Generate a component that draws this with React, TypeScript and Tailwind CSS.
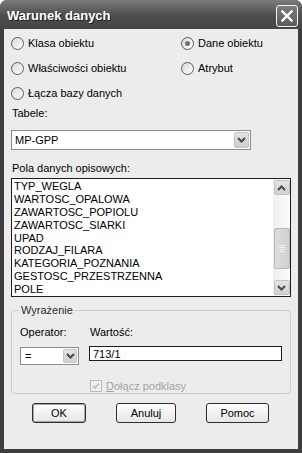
import React from "react";

function Chevron({ up = false, color = "#4a4a4a" }: { up?: boolean; color?: string }) {
  return (
    <svg width="9" height="6" viewBox="0 0 9 6">
      <path
        d={up ? "M1 5 L4.5 1.5 L8 5" : "M1 1 L4.5 4.5 L8 1"}
        fill="none"
        stroke={color}
        strokeWidth="2"
      />
    </svg>
  );
}

function Radio({ label, checked = false }: { label: string; checked?: boolean }) {
  return (
    <div className="flex items-center h-[24px]">
      <span className="w-[13px] h-[13px] rounded-full border border-[#5c5c5c] bg-gradient-to-br from-[#d9d9d9] to-[#ffffff] flex items-center justify-center shrink-0">
        {checked && <span className="w-[5px] h-[5px] rounded-full bg-[#707070]" />}
      </span>
      <span className="ml-[4px]">{label}</span>
    </div>
  );
}

function DropBtn({ w = 15, h = 16 }: { w?: number; h?: number }) {
  return (
    <div
      className="rounded-[2px] bg-gradient-to-b from-[#e2e2e2] to-[#cfcfcf] border border-[#c4c4c4] flex items-center justify-center"
      style={{ width: w, height: h }}
    >
      <Chevron />
    </div>
  );
}

const items = [
  "TYP_WEGLA",
  "WARTOSC_OPALOWA",
  "ZAWARTOSC_POPIOLU",
  "ZAWARTOSC_SIARKI",
  "UPAD",
  "RODZAJ_FILARA",
  "KATEGORIA_POZNANIA",
  "GESTOSC_PRZESTRZENNA",
  "POLE",
];

export default function App() {
  return (
    <div className="w-[302px] h-[453px] bg-[#3e3e3e] flex flex-col rounded-t-[7px] overflow-hidden font-['Liberation_Sans',Arial,sans-serif] text-[11px] text-black leading-[14px]">
      <div className="h-[29px] shrink-0 flex items-center justify-between pl-[7px] pr-[4px] bg-gradient-to-b from-[#7c7c7c] via-[#4f4f4f] to-[#444444]">
        <span className="text-white font-bold text-[13px] [text-shadow:1px_1px_0_#1e1e1e] mt-[2px]">
          Warunek danych
        </span>
        <div className="w-[22px] h-[22px] rounded-[3px] border border-[#f2f2f2] bg-gradient-to-b from-[#7e7e7e] to-[#5a5a5a] flex items-center justify-center mt-[3px]">
          <svg width="12" height="12" viewBox="0 0 12 12">
            <path d="M1.5 1.5 L10.5 10.5 M10.5 1.5 L1.5 10.5" stroke="#ffffff" strokeWidth="2.4" strokeLinecap="square" />
          </svg>
        </div>
      </div>

      <div className="flex-1 mx-[4px] mb-[4px] bg-[#ececec] flex flex-col px-[7px]">
        <div className="grid grid-cols-[170px_1fr] gap-y-[1px] pt-[2px]">
          <Radio label="Klasa obiektu" />
          <Radio label="Dane obiektu" checked />
          <Radio label="Właściwości obiektu" />
          <Radio label="Atrybut" />
          <Radio label="Łącza bazy danych" />
          <div />
        </div>

        <div className="mt-[1px] h-[14px] pl-[1px]">Tabele:</div>
        <div className="mt-[10px] w-[240px] h-[20px] border border-[#8c8c8c] bg-white flex items-center justify-between pl-[3px] pr-[1px]">
          <span>MP-GPP</span>
          <DropBtn w={15} h={16} />
        </div>

        <div className="mt-[11px] h-[14px] pl-[1px]">Pola danych opisowych:</div>
        <div className="mt-[3px] h-[119px] border border-[#1e1e1e] bg-white flex">
          <div className="flex-1 pl-[2px] pt-[1px] leading-[12.9px] overflow-hidden">
            {items.map((t) => (
              <div key={t} className="h-[12.9px] whitespace-nowrap">
                {t}
              </div>
            ))}
          </div>
          <div className="w-[17px] bg-gradient-to-r from-[#f0f0f0] to-[#fbfbfb] flex flex-col items-center pt-[1px] pb-[1px]">
            <div className="w-[16px] h-[15px] rounded-[2px] bg-gradient-to-b from-[#e4e4e4] to-[#d0d0d0] border border-[#c2c2c2] flex items-center justify-center">
              <Chevron up />
            </div>
            <div className="w-[16px] h-[41px] mt-[33px] rounded-[2px] bg-gradient-to-r from-[#dcdcdc] to-[#d2d2d2] border border-[#b8b8b8] flex flex-col items-center justify-center gap-[1px]">
              <div className="w-[6px] h-[1px] bg-[#f0f0f0]" />
              <div className="w-[6px] h-[1px] bg-[#f0f0f0]" />
              <div className="w-[6px] h-[1px] bg-[#f0f0f0]" />
              <div className="w-[6px] h-[1px] bg-[#f0f0f0]" />
            </div>
            <div className="flex-1" />
            <div className="w-[16px] h-[15px] rounded-[2px] bg-gradient-to-b from-[#e4e4e4] to-[#d0d0d0] border border-[#c2c2c2] flex items-center justify-center">
              <Chevron />
            </div>
          </div>
        </div>

        <div className="relative mt-[13px] h-[84px] border border-[#cfcfcf] rounded-[4px] pl-[8px] pt-[14px]">
          <span className="absolute top-[-8px] left-[7px] px-[2px] bg-[#ececec] text-[#2a2a2a]">Wyrażenie</span>
          <div className="flex">
            <div className="w-[69px]">
              <div className="h-[14px]">Operator:</div>
              <div className="mt-[8px] w-[59px] h-[18px] border border-[#8c8c8c] bg-white flex items-center justify-between pl-[4px] pr-[1px]">
                <span>=</span>
                <DropBtn w={14} h={14} />
              </div>
            </div>
            <div className="flex-1">
              <div className="h-[14px] pl-[1px]">Wartość:</div>
              <div className="mt-[7px] w-[193px] h-[15px] border border-[#1e1e1e] bg-white flex items-center pl-[3px]">
                713/1
              </div>
            </div>
          </div>
          <div className="mt-[15px] ml-[70px] flex items-center h-[12px]">
            <span className="w-[12px] h-[12px] border border-[#b9b9b9] bg-[#f2f2f2] flex items-center justify-center">
              <svg width="8" height="8" viewBox="0 0 8 8">
                <path d="M1 4 L3 6 L7 1.5" fill="none" stroke="#bdbdbd" strokeWidth="1.8" />
              </svg>
            </span>
            <span className="ml-[4px] text-[#a3a3a3]">
              <span className="underline">D</span>ołącz podklasy
            </span>
          </div>
        </div>

        <div className="mt-[9px] flex pl-[21px] gap-[30px]">
          <button className="w-[54px] h-[20px] rounded-[3px] border border-[#2e2e2e] bg-gradient-to-b from-[#ffffff] to-[#e6e6e6] shadow-[inset_0_0_0_1px_#a8a8a8] text-[11px]">
            OK
          </button>
          <button className="w-[60px] h-[20px] rounded-[3px] border border-[#2e2e2e] bg-gradient-to-b from-[#ffffff] to-[#e6e6e6] text-[11px]">
            Anuluj
          </button>
          <button className="w-[63px] h-[20px] rounded-[3px] border border-[#2e2e2e] bg-gradient-to-b from-[#ffffff] to-[#e6e6e6] text-[11px]">
            Pomoc
          </button>
        </div>
      </div>
    </div>
  );
}
